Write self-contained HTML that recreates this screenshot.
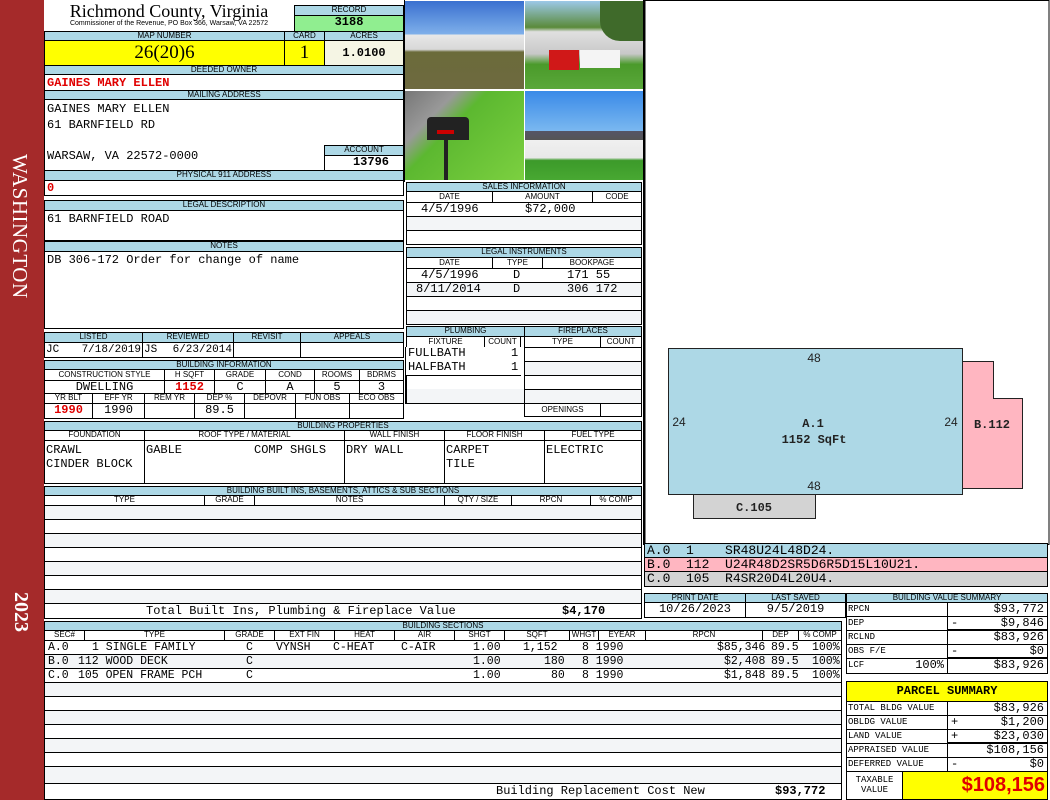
<!DOCTYPE html>
<html><head><meta charset="utf-8"><style>
*{margin:0;padding:0}
body{width:1050px;height:800px;position:relative;background:#fff;overflow:hidden;font-family:"Liberation Sans",sans-serif}
.a{position:absolute;box-sizing:border-box;border:1px solid #000;overflow:hidden;white-space:nowrap}
.h{background:#add8e6;font-size:8px;text-align:center;line-height:8px;color:#000}
.v{font-family:"Liberation Mono",monospace;font-size:12px;line-height:13px;background:#fff}
.c{text-align:center}.r{text-align:right;padding-right:3px}
.red{color:#e00000;font-weight:bold}
.p{position:absolute}
</style></head><body>
<div class="p" style="left:0;top:0;width:44px;height:800px;background:#a52a2a"></div>
<div class="p" style="left:32px;top:154px;transform-origin:0 0;transform:rotate(90deg);color:#fff;font:21px 'Liberation Serif',serif;letter-spacing:0.5px;white-space:nowrap">WASHINGTON</div>
<div class="p" style="left:32px;top:592px;transform-origin:0 0;transform:rotate(90deg);color:#fff;font:bold 20px 'Liberation Serif',serif;white-space:nowrap">2023</div>

<div class="p" style="left:44px;top:2px;width:250px;text-align:center;font:18px 'Liberation Serif',serif;line-height:19px">Richmond County, Virginia</div>
<div class="p" style="left:44px;top:20px;width:250px;text-align:center;font:7px 'Liberation Sans',sans-serif">Commissioner of the Revenue, PO Box 366, Warsaw, VA 22572</div>

<div class="a h" style="left:294px;top:5px;width:110px;height:11px">RECORD</div>
<div class="a v c" style="left:294px;top:15px;width:110px;height:17px;background:#90ee90;font-weight:bold">3188</div>

<div class="a h" style="left:44px;top:31px;width:241px;height:10px">MAP NUMBER</div>
<div class="a h" style="left:284px;top:31px;width:41px;height:10px">CARD</div>
<div class="a h" style="left:324px;top:31px;width:80px;height:10px">ACRES</div>
<div class="a c" style="left:44px;top:40px;width:241px;height:26px;background:#ff0;font:19px 'Liberation Serif',serif;line-height:24px">26(20)6</div>
<div class="a c" style="left:284px;top:40px;width:41px;height:26px;background:#ff0;font:19px 'Liberation Serif',serif;line-height:24px">1</div>
<div class="a v c" style="left:324px;top:40px;width:80px;height:26px;background:#f5f5e4;font-weight:bold;line-height:24px">1.0100</div>

<div class="a h" style="left:44px;top:65px;width:360px;height:10px">DEEDED OWNER</div>
<div class="a v red" style="left:44px;top:74px;width:360px;height:17px;padding:2px 2px">GAINES MARY ELLEN</div>
<div class="a h" style="left:44px;top:90px;width:360px;height:10px">MAILING ADDRESS</div>
<div class="a v" style="left:44px;top:99px;width:360px;height:72px;padding:2px 2px;line-height:15.5px">GAINES MARY ELLEN<br>61 BARNFIELD RD<br><br>WARSAW, VA 22572-0000</div>
<div class="a h" style="left:324px;top:145px;width:80px;height:11px">ACCOUNT</div>
<div class="a v r" style="left:324px;top:155px;width:80px;height:16px;font-weight:bold;padding-right:14px">13796</div>
<div class="a h" style="left:44px;top:170px;width:360px;height:11px">PHYSICAL 911 ADDRESS</div>
<div class="a v red" style="left:44px;top:180px;width:360px;height:16px;padding:1px 2px">0</div>

<div class="a h" style="left:44px;top:200px;width:360px;height:11px">LEGAL DESCRIPTION</div>
<div class="a v" style="left:44px;top:210px;width:360px;height:31px;padding:2px 2px">61 BARNFIELD ROAD</div>
<div class="a h" style="left:44px;top:241px;width:360px;height:11px">NOTES</div>
<div class="a v" style="left:44px;top:251px;width:360px;height:78px;padding:2px 2px">DB 306-172 Order for change of name</div>

<div class="a h" style="left:44px;top:332px;width:99px;height:11px">LISTED</div>
<div class="a h" style="left:142px;top:332px;width:92px;height:11px">REVIEWED</div>
<div class="a h" style="left:233px;top:332px;width:68px;height:11px">REVISIT</div>
<div class="a h" style="left:300px;top:332px;width:104px;height:11px">APPEALS</div>
<div class="a v" style="left:44px;top:342px;width:99px;height:16px;padding:1px 1px;font-size:11px"><span>JC</span><span class="p" style="right:1px">7/18/2019</span></div>
<div class="a v" style="left:142px;top:342px;width:92px;height:16px;padding:1px 1px;font-size:11px"><span>JS</span><span class="p" style="right:1px">6/23/2014</span></div>
<div class="a v" style="left:233px;top:342px;width:68px;height:16px"></div>
<div class="a v" style="left:300px;top:342px;width:104px;height:16px"></div>

<div class="a h" style="left:44px;top:360px;width:360px;height:10px">BUILDING INFORMATION</div>
<div class="a h" style="left:44px;top:369px;width:121px;height:12px;background:#fff;line-height:10px">CONSTRUCTION STYLE</div>
<div class="a h" style="left:164px;top:369px;width:51px;height:12px;background:#fff;line-height:10px">H SQFT</div>
<div class="a h" style="left:214px;top:369px;width:52px;height:12px;background:#fff;line-height:10px">GRADE</div>
<div class="a h" style="left:265px;top:369px;width:50px;height:12px;background:#fff;line-height:10px">COND</div>
<div class="a h" style="left:314px;top:369px;width:46px;height:12px;background:#fff;line-height:10px">ROOMS</div>
<div class="a h" style="left:359px;top:369px;width:45px;height:12px;background:#fff;line-height:10px">BDRMS</div>
<div class="a v c" style="left:44px;top:380px;width:121px;height:14px">DWELLING</div>
<div class="a v c red" style="left:164px;top:380px;width:51px;height:14px">1152</div>
<div class="a v c" style="left:214px;top:380px;width:52px;height:14px">C</div>
<div class="a v c" style="left:265px;top:380px;width:50px;height:14px">A</div>
<div class="a v c" style="left:314px;top:380px;width:46px;height:14px">5</div>
<div class="a v c" style="left:359px;top:380px;width:45px;height:14px">3</div>
<div class="a h" style="left:44px;top:393px;width:49px;height:11px;background:#fff">YR BLT</div>
<div class="a h" style="left:92px;top:393px;width:53px;height:11px;background:#fff">EFF YR</div>
<div class="a h" style="left:144px;top:393px;width:51px;height:11px;background:#fff">REM YR</div>
<div class="a h" style="left:194px;top:393px;width:51px;height:11px;background:#fff">DEP %</div>
<div class="a h" style="left:244px;top:393px;width:52px;height:11px;background:#fff">DEPOVR</div>
<div class="a h" style="left:295px;top:393px;width:55px;height:11px;background:#fff">FUN OBS</div>
<div class="a h" style="left:349px;top:393px;width:55px;height:11px;background:#fff">ECO OBS</div>
<div class="a v c red" style="left:44px;top:403px;width:49px;height:16px">1990</div>
<div class="a v c" style="left:92px;top:403px;width:53px;height:16px">1990</div>
<div class="a v" style="left:144px;top:403px;width:51px;height:16px"></div>
<div class="a v c" style="left:194px;top:403px;width:51px;height:16px">89.5</div>
<div class="a v" style="left:244px;top:403px;width:52px;height:16px"></div>
<div class="a v" style="left:295px;top:403px;width:55px;height:16px"></div>
<div class="a v" style="left:349px;top:403px;width:55px;height:16px"></div>

<div class="a h" style="left:44px;top:421px;width:598px;height:10px">BUILDING PROPERTIES</div>
<div class="a h" style="left:44px;top:430px;width:101px;height:11px;background:#fff">FOUNDATION</div>
<div class="a h" style="left:144px;top:430px;width:201px;height:11px;background:#fff">ROOF TYPE / MATERIAL</div>
<div class="a h" style="left:344px;top:430px;width:101px;height:11px;background:#fff">WALL FINISH</div>
<div class="a h" style="left:444px;top:430px;width:101px;height:11px;background:#fff">FLOOR FINISH</div>
<div class="a h" style="left:544px;top:430px;width:98px;height:11px;background:#fff">FUEL TYPE</div>
<div class="a v" style="left:44px;top:440px;width:101px;height:44px;padding:2px 1px;line-height:14px">CRAWL<br>CINDER BLOCK</div>
<div class="a v" style="left:144px;top:440px;width:201px;height:44px;padding:2px 1px;line-height:14px">GABLE&nbsp;&nbsp;&nbsp;&nbsp;&nbsp;&nbsp;&nbsp;&nbsp;&nbsp;&nbsp;COMP SHGLS</div>
<div class="a v" style="left:344px;top:440px;width:101px;height:44px;padding:2px 1px;line-height:14px">DRY WALL</div>
<div class="a v" style="left:444px;top:440px;width:101px;height:44px;padding:2px 1px;line-height:14px">CARPET<br>TILE</div>
<div class="a v" style="left:544px;top:440px;width:98px;height:44px;padding:2px 1px;line-height:14px">ELECTRIC</div>

<div class="a h" style="left:44px;top:486px;width:598px;height:10px">BUILDING BUILT INS, BASEMENTS, ATTICS &amp; SUB SECTIONS</div>
<div class="a h" style="left:44px;top:495px;width:161px;height:11px;background:#fff">TYPE</div>
<div class="a h" style="left:204px;top:495px;width:51px;height:11px;background:#fff">GRADE</div>
<div class="a h" style="left:254px;top:495px;width:191px;height:11px;background:#fff">NOTES</div>
<div class="a h" style="left:444px;top:495px;width:68px;height:11px;background:#fff">QTY / SIZE</div>
<div class="a h" style="left:511px;top:495px;width:80px;height:11px;background:#fff">RPCN</div>
<div class="a h" style="left:590px;top:495px;width:52px;height:11px;background:#fff">% COMP</div>
<div class="a" style="left:44px;top:505px;width:598px;height:15px;background:#f3f5f7"></div>
<div class="a" style="left:44px;top:519px;width:598px;height:15px"></div>
<div class="a" style="left:44px;top:533px;width:598px;height:15px;background:#f3f5f7"></div>
<div class="a" style="left:44px;top:547px;width:598px;height:15px"></div>
<div class="a" style="left:44px;top:561px;width:598px;height:15px;background:#f3f5f7"></div>
<div class="a" style="left:44px;top:575px;width:598px;height:15px"></div>
<div class="a" style="left:44px;top:589px;width:598px;height:15px;background:#f3f5f7"></div>
<div class="a v" style="left:44px;top:603px;width:598px;height:16px;padding:1px 0"><span style="position:absolute;left:101px">Total Built Ins, Plumbing &amp; Fireplace Value</span><span style="position:absolute;left:517px;font-weight:bold">$4,170</span></div>

<div class="a h" style="left:44px;top:621px;width:798px;height:10px">BUILDING SECTIONS</div>
<div class="a h" style="left:44px;top:630px;width:41px;height:11px;background:#fff">SEC#</div>
<div class="a h" style="left:84px;top:630px;width:141px;height:11px;background:#fff">TYPE</div>
<div class="a h" style="left:224px;top:630px;width:51px;height:11px;background:#fff">GRADE</div>
<div class="a h" style="left:274px;top:630px;width:61px;height:11px;background:#fff">EXT FIN</div>
<div class="a h" style="left:334px;top:630px;width:61px;height:11px;background:#fff">HEAT</div>
<div class="a h" style="left:394px;top:630px;width:61px;height:11px;background:#fff">AIR</div>
<div class="a h" style="left:454px;top:630px;width:51px;height:11px;background:#fff">SHGT</div>
<div class="a h" style="left:504px;top:630px;width:66px;height:11px;background:#fff">SQFT</div>
<div class="a h" style="left:569px;top:630px;width:30px;height:11px;background:#fff">WHGT</div>
<div class="a h" style="left:598px;top:630px;width:48px;height:11px;background:#fff">EYEAR</div>
<div class="a h" style="left:645px;top:630px;width:118px;height:11px;background:#fff">RPCN</div>
<div class="a h" style="left:762px;top:630px;width:37px;height:11px;background:#fff">DEP</div>
<div class="a h" style="left:798px;top:630px;width:44px;height:11px;background:#fff">% COMP</div>
<div class="a v" style="left:44px;top:640px;width:798px;height:15px;background:#fff;font-size:11.5px"><span class="p" style="left:3px">A.0</span><span class="p" style="left:47px">1 SINGLE FAMILY</span><span class="p" style="left:201px">C</span><span class="p" style="left:231px">VYNSH</span><span class="p" style="left:288px">C-HEAT</span><span class="p" style="left:356px">C-AIR</span><span class="p" style="left:428px">1.00</span><span class="p" style="left:478px">1,152</span><span class="p" style="left:537px">8 1990</span><span class="p" style="left:672px">$85,346</span><span class="p" style="left:726px">89.5</span><span class="p" style="left:767px">100%</span></div>
<div class="a v" style="left:44px;top:654px;width:798px;height:15px;background:#f3f5f7;font-size:11.5px"><span class="p" style="left:3px">B.0</span><span class="p" style="left:33px">112 WOOD DECK</span><span class="p" style="left:201px">C</span><span class="p" style="left:428px">1.00</span><span class="p" style="left:499px">180</span><span class="p" style="left:537px">8 1990</span><span class="p" style="left:679px">$2,408</span><span class="p" style="left:726px">89.5</span><span class="p" style="left:767px">100%</span></div>
<div class="a v" style="left:44px;top:668px;width:798px;height:15px;background:#fff;font-size:11.5px"><span class="p" style="left:3px">C.0</span><span class="p" style="left:33px">105 OPEN FRAME PCH</span><span class="p" style="left:201px">C</span><span class="p" style="left:428px">1.00</span><span class="p" style="left:506px">80</span><span class="p" style="left:537px">8 1990</span><span class="p" style="left:679px">$1,848</span><span class="p" style="left:726px">89.5</span><span class="p" style="left:767px">100%</span></div>
<div class="a" style="left:44px;top:682px;width:798px;height:15px;background:#f3f5f7"></div>
<div class="a" style="left:44px;top:696px;width:798px;height:15px"></div>
<div class="a" style="left:44px;top:710px;width:798px;height:15px;background:#f3f5f7"></div>
<div class="a" style="left:44px;top:724px;width:798px;height:15px"></div>
<div class="a" style="left:44px;top:738px;width:798px;height:15px;background:#f3f5f7"></div>
<div class="a" style="left:44px;top:752px;width:798px;height:15px"></div>
<div class="a" style="left:44px;top:766px;width:798px;height:18px;background:#f3f5f7"></div>
<div class="a v" style="left:44px;top:783px;width:798px;height:17px;padding:1px 0"><span class="p" style="left:451px">Building Replacement Cost New</span><span class="p" style="left:730px;font-weight:bold">$93,772</span></div>

<!-- photos -->
<div class="p" style="left:405px;top:1px;width:119px;height:88px;background:linear-gradient(#3a70d0 0,#7fb0ea 38%,#e8e8e8 38%,#d8d8d8 55%,#6b6b3a 58%,#6e6a40 100%)"></div>
<div class="p" style="left:525px;top:1px;width:119px;height:88px;background:linear-gradient(#9cc8e8 0,#5a8a3a 30%,#e0e0e0 35%,#c8c8c8 60%,#4a9a2a 72%,#5aa83a 100%)"></div>
<div class="p" style="left:600px;top:1px;width:44px;height:40px;background:#3f6a2a;border-radius:0 0 0 20px"></div>
<div class="p" style="left:549px;top:50px;width:30px;height:20px;background:#d01818"></div>
<div class="p" style="left:580px;top:50px;width:40px;height:18px;background:#f4f4f4"></div>
<div class="p" style="left:405px;top:91px;width:119px;height:89px;background:linear-gradient(135deg,#777 0,#999 25%,#5cb830 40%,#7cd040 100%)"></div>
<div class="p" style="left:427px;top:117px;width:42px;height:23px;background:#222;border-radius:4px 4px 0 0"></div>
<div class="p" style="left:437px;top:130px;width:17px;height:4px;background:#c00"></div>
<div class="p" style="left:444px;top:140px;width:4px;height:40px;background:#222"></div>
<div class="p" style="left:525px;top:91px;width:119px;height:89px;background:linear-gradient(#3a8ae8 0,#7ab8f0 45%,#556 45%,#555 55%,#f0f0f0 55%,#e8e8e8 75%,#3c9a2a 78%,#48a832 100%)"></div>
<div class="p" style="left:404px;top:0;width:1px;height:182px;background:#000"></div>
<div class="p" style="left:643px;top:0;width:2px;height:545px;background:#000"></div>

<div class="a h" style="left:406px;top:182px;width:236px;height:10px">SALES INFORMATION</div>
<div class="a h" style="left:406px;top:191px;width:87px;height:12px;background:#fff;line-height:10px">DATE</div>
<div class="a h" style="left:492px;top:191px;width:101px;height:12px;background:#fff;line-height:10px">AMOUNT</div>
<div class="a h" style="left:592px;top:191px;width:50px;height:12px;background:#fff;line-height:10px">CODE</div>
<div class="a v" style="left:406px;top:202px;width:236px;height:15px"><span class="p" style="left:14px">4/5/1996</span><span class="p" style="left:118px">$72,000</span></div>
<div class="a" style="left:406px;top:216px;width:236px;height:15px;background:#f3f5f7"></div>
<div class="a" style="left:406px;top:230px;width:236px;height:15px"></div>

<div class="a h" style="left:406px;top:247px;width:236px;height:11px">LEGAL INSTRUMENTS</div>
<div class="a h" style="left:406px;top:257px;width:87px;height:12px;background:#fff;line-height:10px">DATE</div>
<div class="a h" style="left:492px;top:257px;width:51px;height:12px;background:#fff;line-height:10px">TYPE</div>
<div class="a h" style="left:542px;top:257px;width:100px;height:12px;background:#fff;line-height:10px">BOOKPAGE</div>
<div class="a v" style="left:406px;top:268px;width:236px;height:15px"><span class="p" style="left:14px">4/5/1996</span><span class="p" style="left:106px">D</span><span class="p" style="left:160px">171 55</span></div>
<div class="a v" style="left:406px;top:282px;width:236px;height:15px;background:#f3f5f7"><span class="p" style="left:9px">8/11/2014</span><span class="p" style="left:106px">D</span><span class="p" style="left:160px">306 172</span></div>
<div class="a" style="left:406px;top:296px;width:236px;height:15px"></div>
<div class="a" style="left:406px;top:310px;width:236px;height:15px;background:#f3f5f7"></div>

<div class="a h" style="left:406px;top:326px;width:119px;height:11px">PLUMBING</div>
<div class="a h" style="left:524px;top:326px;width:118px;height:11px">FIREPLACES</div>
<div class="a h" style="left:406px;top:336px;width:79px;height:12px;background:#fff;line-height:10px">FIXTURE</div>
<div class="a h" style="left:484px;top:336px;width:37px;height:12px;background:#fff;line-height:10px">COUNT</div>
<div class="a h" style="left:524px;top:336px;width:77px;height:12px;background:#fff;line-height:10px">TYPE</div>
<div class="a h" style="left:600px;top:336px;width:42px;height:12px;background:#fff;line-height:10px">COUNT</div>
<div class="a v" style="left:406px;top:347px;width:115px;height:15px;border-width:0 0 1px 0"><span class="p" style="left:2px">FULLBATH</span><span class="p" style="left:105px">1</span></div>
<div class="a v" style="left:406px;top:361px;width:115px;height:15px;border-width:0 0 1px 0"><span class="p" style="left:2px">HALFBATH</span><span class="p" style="left:105px">1</span></div>
<div class="a" style="left:406px;top:375px;width:119px;height:15px;border-width:0 1px 1px 1px"></div>
<div class="a" style="left:406px;top:389px;width:119px;height:15px;border-width:0 1px 1px 1px;background:#f3f5f7"></div>
<div class="p" style="left:405px;top:347px;width:1px;height:57px;background:#000"></div>
<div class="a" style="left:524px;top:347px;width:118px;height:15px"></div>
<div class="a" style="left:524px;top:361px;width:118px;height:15px;background:#f3f5f7"></div>
<div class="a" style="left:524px;top:375px;width:118px;height:15px"></div>
<div class="a" style="left:524px;top:389px;width:118px;height:15px;background:#f3f5f7"></div>
<div class="a h" style="left:524px;top:403px;width:77px;height:14px;background:#fff;line-height:12px">OPENINGS</div>
<div class="a" style="left:600px;top:403px;width:42px;height:14px"></div>

<!-- sketch -->
<svg class="p" style="left:644px;top:0" width="406" height="545">
<rect x="24.5" y="348.5" width="294" height="146" fill="#add8e6" stroke="#222"/>
<polygon points="318.5,361.5 349.5,361.5 349.5,398.5 378.5,398.5 378.5,488.5 318.5,488.5" fill="#ffb6c1" stroke="#222"/>
<rect x="49.5" y="494.5" width="122" height="24" fill="#d3d3d3" stroke="#222"/>
<g font-family="Liberation Sans" font-size="12" fill="#222" text-anchor="middle">
<text x="170" y="362">48</text><text x="170" y="490">48</text>
<text x="35" y="426">24</text><text x="307" y="426">24</text>
</g>
<g font-family="Liberation Mono" font-size="12" font-weight="bold" fill="#222" text-anchor="middle">
<text x="169" y="427">A.1</text><text x="170" y="443">1152 SqFt</text>
<text x="348" y="428">B.112</text><text x="110" y="511">C.105</text>
</g>
<rect x="1" y="0.5" width="404" height="544" fill="none" stroke="#000"/>
</svg>
<div class="a v" style="left:644px;top:543px;width:404px;height:15px;background:#add8e6;font-size:13px;padding-left:2px">A.0&nbsp;&nbsp;1&nbsp;&nbsp;&nbsp;&nbsp;SR48U24L48D24.</div>
<div class="a v" style="left:644px;top:557px;width:404px;height:15px;background:#ffb6c1;font-size:13px;padding-left:2px">B.0&nbsp;&nbsp;112&nbsp;&nbsp;U24R48D2SR5D6R5D15L10U21.</div>
<div class="a v" style="left:644px;top:571px;width:404px;height:16px;background:#d3d3d3;font-size:13px;padding-left:2px">C.0&nbsp;&nbsp;105&nbsp;&nbsp;R4SR20D4L20U4.</div>

<div class="a h" style="left:644px;top:593px;width:102px;height:10px">PRINT DATE</div>
<div class="a h" style="left:745px;top:593px;width:101px;height:10px">LAST SAVED</div>
<div class="a v c" style="left:644px;top:602px;width:102px;height:16px">10/26/2023</div>
<div class="a v c" style="left:745px;top:602px;width:101px;height:16px">9/5/2019</div>

<div class="a h" style="left:846px;top:593px;width:202px;height:10px">BUILDING VALUE SUMMARY</div>
<div class="a v" style="left:846px;top:602px;width:102px;height:15px;font-size:9px;padding-left:1px">RPCN</div>
<div class="a v r" style="left:947px;top:602px;width:101px;height:15px">$93,772</div>
<div class="a v" style="left:846px;top:616px;width:102px;height:15px;font-size:9px;padding-left:1px">DEP</div>
<div class="a v r" style="left:947px;top:616px;width:101px;height:15px;border-bottom-width:2px"><span class="p" style="left:3px">-</span>$9,846</div>
<div class="a v" style="left:846px;top:630px;width:102px;height:15px;font-size:9px;padding-left:1px">RCLND</div>
<div class="a v r" style="left:947px;top:630px;width:101px;height:15px">$83,926</div>
<div class="a v" style="left:846px;top:644px;width:102px;height:15px;font-size:9px;padding-left:1px">OBS F/E</div>
<div class="a v r" style="left:947px;top:644px;width:101px;height:15px;border-bottom-width:2px"><span class="p" style="left:3px">-</span>$0</div>
<div class="a v" style="left:846px;top:658px;width:102px;height:16px;font-size:9px;padding-left:1px">LCF<span class="p" style="right:3px;font-size:12px">100%</span></div>
<div class="a v r" style="left:947px;top:658px;width:101px;height:16px">$83,926</div>

<div class="a c" style="left:846px;top:681px;width:202px;height:21px;background:#ff0;font:bold 12px 'Liberation Mono',monospace;line-height:19px">PARCEL SUMMARY</div>
<div class="a v" style="left:846px;top:701px;width:102px;height:15px;font-size:9px;padding-left:1px">TOTAL BLDG VALUE</div>
<div class="a v r" style="left:947px;top:701px;width:101px;height:15px">$83,926</div>
<div class="a v" style="left:846px;top:715px;width:102px;height:15px;font-size:9px;padding-left:1px">OBLDG VALUE</div>
<div class="a v r" style="left:947px;top:715px;width:101px;height:15px"><span class="p" style="left:3px">+</span>$1,200</div>
<div class="a v" style="left:846px;top:729px;width:102px;height:15px;font-size:9px;padding-left:1px">LAND VALUE</div>
<div class="a v r" style="left:947px;top:729px;width:101px;height:15px;border-bottom-width:2px"><span class="p" style="left:3px">+</span>$23,030</div>
<div class="a v" style="left:846px;top:743px;width:102px;height:15px;font-size:9px;padding-left:1px">APPRAISED VALUE</div>
<div class="a v r" style="left:947px;top:743px;width:101px;height:15px">$108,156</div>
<div class="a v" style="left:846px;top:757px;width:102px;height:15px;font-size:9px;padding-left:1px">DEFERRED VALUE</div>
<div class="a v r" style="left:947px;top:757px;width:101px;height:15px"><span class="p" style="left:3px">-</span>$0</div>
<div class="a v c" style="left:846px;top:771px;width:57px;height:29px;font-size:9px;line-height:10px;padding-top:3px">TAXABLE<br>VALUE</div>
<div class="a r" style="left:902px;top:771px;width:146px;height:29px;background:#ff0;color:#e00000;font:bold 20px 'Liberation Sans',sans-serif;line-height:27px;padding-right:2px">$108,156</div>
</body></html>
